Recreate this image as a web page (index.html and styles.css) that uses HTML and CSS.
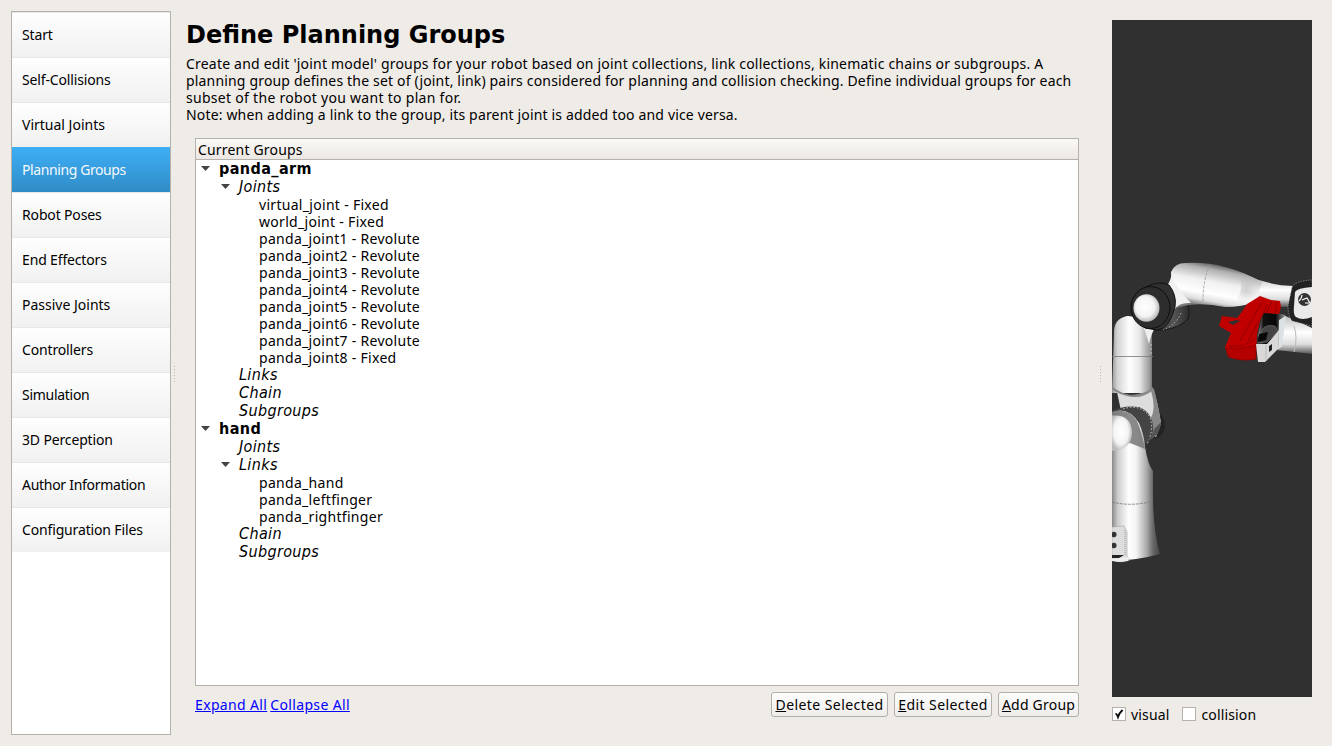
FILE: index.html
```html
<!DOCTYPE html>
<html lang="en">
<head>
<meta charset="utf-8">
<title>Define Planning Groups</title>
<link rel="stylesheet" href="styles.css">
</head>
<body>
<div class="app">
  <nav class="sidebar">
    <a class="nav-item">Start</a>
    <a class="nav-item">Self-Collisions</a>
    <a class="nav-item even">Virtual Joints</a>
    <a class="nav-item selected">Planning Groups</a>
    <a class="nav-item">Robot Poses</a>
    <a class="nav-item">End Effectors</a>
    <a class="nav-item even">Passive Joints</a>
    <a class="nav-item">Controllers</a>
    <a class="nav-item tight">Simulation</a>
    <a class="nav-item">3D Perception</a>
    <a class="nav-item tight">Author Information</a>
    <a class="nav-item">Configuration Files</a>
  </nav>
  <div class="splitter first"></div>
  <main class="content">
    <h1>Define Planning Groups</h1>
    <p class="intro"><span class="l1">Create and edit 'joint model' groups for your robot based on joint collections, link collections, kinematic chains or subgroups. A</span><br><span class="l2">planning group defines the set of (joint, link) pairs considered for planning and collision checking. Define individual groups for each</span><br><span class="l3">subset of the robot you want to plan for.</span><br><span class="l4">Note: when adding a link to the group, its parent joint is added too and vice versa.</span></p>
    <section class="tree">
      <div class="tree-head">Current Groups</div>
      <div class="group open"><span>panda_arm</span></div>
      <div class="kind open"><span>Joints</span></div>
      <div class="leaf">virtual_joint - Fixed</div>
      <div class="leaf">world_joint - Fixed</div>
      <div class="leaf">panda_joint1 - Revolute</div>
      <div class="leaf">panda_joint2 - Revolute</div>
      <div class="leaf">panda_joint3 - Revolute</div>
      <div class="leaf">panda_joint4 - Revolute</div>
      <div class="leaf">panda_joint5 - Revolute</div>
      <div class="leaf">panda_joint6 - Revolute</div>
      <div class="leaf">panda_joint7 - Revolute</div>
      <div class="leaf">panda_joint8 - Fixed</div>
      <div class="kind"><span>Links</span></div>
      <div class="kind"><span>Chain</span></div>
      <div class="kind"><span>Subgroups</span></div>
      <div class="group open"><span>hand</span></div>
      <div class="kind"><span>Joints</span></div>
      <div class="kind open"><span>Links</span></div>
      <div class="leaf">panda_hand</div>
      <div class="leaf">panda_leftfinger</div>
      <div class="leaf">panda_rightfinger</div>
      <div class="kind"><span>Chain</span></div>
      <div class="kind"><span>Subgroups</span></div>
    </section>
    <footer class="actions">
      <div class="links"><a>Expand All</a><a>Collapse All</a></div>
      <button class="delete"><u>D</u>elete Selected</button>
      <button class="edit"><u>E</u>dit Selected</button>
      <button class="add"><u>A</u>dd Group</button>
    </footer>
  </main>
  <div class="splitter second"></div>
  <aside class="preview">
    <svg class="robot" viewBox="1112 20 200 677" width="200" height="677">
      <defs>
        <linearGradient id="col" gradientUnits="userSpaceOnUse" x1="1112" x2="1154" y1="0" y2="0">
          <stop offset="0" stop-color="#999"/><stop offset=".13" stop-color="#d4d4d4"/><stop offset=".42" stop-color="#fff"/><stop offset=".65" stop-color="#e8e8e8"/><stop offset=".9" stop-color="#999"/><stop offset="1" stop-color="#555"/>
        </linearGradient>
        <linearGradient id="base" gradientUnits="userSpaceOnUse" x1="1112" x2="1160" y1="0" y2="0">
          <stop offset="0" stop-color="#888"/><stop offset=".12" stop-color="#ccc"/><stop offset=".35" stop-color="#fff"/><stop offset=".5" stop-color="#f4f4f4"/><stop offset=".72" stop-color="#aaa"/><stop offset=".86" stop-color="#666"/><stop offset="1" stop-color="#444"/>
        </linearGradient>
        <linearGradient id="arm" gradientUnits="userSpaceOnUse" x1="1218" y1="264" x2="1210" y2="307">
          <stop offset="0" stop-color="#555"/><stop offset=".15" stop-color="#b0b0b0"/><stop offset=".42" stop-color="#f0f0f0"/><stop offset=".7" stop-color="#fff"/><stop offset=".87" stop-color="#ddd"/><stop offset="1" stop-color="#777"/>
        </linearGradient>
        <linearGradient id="wrist" x1="0" y1="0" x2="0" y2="1">
          <stop offset="0" stop-color="#bbb"/><stop offset=".45" stop-color="#fff"/><stop offset=".75" stop-color="#ddd"/><stop offset="1" stop-color="#555"/>
        </linearGradient>
        <linearGradient id="knuckle" x1="0" y1="0" x2="1" y2="0">
          <stop offset="0" stop-color="#222"/><stop offset=".6" stop-color="#555"/><stop offset="1" stop-color="#2c2c2c"/>
        </linearGradient>
        <linearGradient id="metal" x1="0" y1="0" x2="1" y2="0">
          <stop offset="0" stop-color="#999"/><stop offset=".2" stop-color="#111"/><stop offset=".65" stop-color="#080808"/><stop offset="1" stop-color="#999"/>
        </linearGradient>
        <radialGradient id="cap" cx=".45" cy=".45" r=".55">
          <stop offset="0" stop-color="#fff"/><stop offset=".65" stop-color="#f4f4f4"/><stop offset="1" stop-color="#bbb"/>
        </radialGradient>
        <radialGradient id="shade" gradientUnits="userSpaceOnUse" cx="1246" cy="290" r="15">
          <stop offset="0" stop-color="#888" stop-opacity=".35"/><stop offset="1" stop-color="#aaa" stop-opacity="0"/>
        </radialGradient>
      </defs>
      <!-- elbow housing -->
      <path d="M1160 290 L1187 304 Q1191 311 1188 319 Q1181 327 1164 330 L1150 330Z" fill="url(#knuckle)" stroke="#181818"/>
      <path d="M1181 313Q1176 325 1163 330" fill="none" stroke="#ddd" stroke-width=".7" stroke-dasharray="1.5 2"/>
      <!-- forearm -->
      <path d="M1248 276 Q1268 285 1293 286 V307 H1276 L1246 303Z" fill="url(#wrist)"/>
      <path d="M1167 286 Q1172 279 1171 272 Q1175 263 1185 263 Q1207 262 1225 267 Q1242 271 1262 282 L1256 302 Q1242 307 1225 307 Q1205 303 1189 305 L1175 308Z" fill="url(#arm)"/>
      <path d="M1225 267Q1244 272 1272 285L1264 304L1225 307Q1245 300 1240 277Z" fill="url(#shade)"/>
      <path d="M1167 286Q1171 281 1172 276Q1176 288 1191 303Q1179 302 1174 310Z" fill="#f1f1f1"/>
      <path d="M1210 265Q1203 279 1203 302" fill="none" stroke="#999" stroke-width=".8" stroke-dasharray="3 1.3"/>
      <!-- upper arm -->
      <path d="M1112 393 L1114 334 Q1113 319 1127 316 Q1136 315 1152 327 V393Z" fill="url(#col)"/>
      <path d="M1144 328H1155Q1151 334 1149 344Z" fill="#eee"/>
      <path d="M1112 356.500H1153" stroke="#777" stroke-width=".8"/>
      <path d="M1151 344V356" stroke="#ddd" stroke-dasharray="2 2" stroke-width=".7"/>
      <!-- elbow -->
      <path d="M1146 287Q1159 280 1169 285Q1177 295 1175 307Q1169 329 1157 330L1145 328Z" fill="#303030" stroke="#111"/>
      <ellipse cx="1150.500" cy="307.500" rx="19.500" ry="21" fill="#2d2d2d" stroke="#0d0d0d"/>
      <ellipse cx="1146.500" cy="308" rx="13" ry="13.800" fill="url(#cap)"/>
      <!-- shoulder -->
      <path d="M1154 410Q1165 415 1165 426Q1163 438 1154 439Z" fill="#222"/>
      <path d="M1117 392 Q1136 400 1153 388 Q1158 404 1161 423 L1156 437 L1123 420Z" fill="#ddd"/>
      <path d="M1112 386Q1118 392 1129 395Q1144 395 1153 387V390Q1144 398 1132 397Q1119 395 1112 389Z" fill="#888"/>
      <path d="M1151 391L1154 389Q1158 404 1161 423L1156 437L1149 421Q1157 411 1151 391Z" fill="#888"/>
      <path d="M1112 411Q1123 405 1139 407Q1154 413 1153 431Q1152 438 1147 444L1112 426Z" fill="#444"/>
      <path d="M1123 409Q1140 403 1150 417Q1154 431 1147 444" fill="none" stroke="#ddd" stroke-width=".9" stroke-dasharray="1.5 2"/>
      <path d="M1154 429L1161 422Q1160 437 1147 441Q1152 436 1154 429Z" fill="#555"/>
      <path d="M1112 412Q1128 406 1139 423Q1144 434 1145 447Q1148 465 1153 471V501Q1154 535 1160 554Q1139 560 1112 561Z" fill="url(#base)"/>
      <path d="M1112 412Q1128 407 1137 421Q1142 433 1145 449L1130 443L1112 450Z" fill="#757575" opacity=".85"/>
      <path d="M1112 415.500Q1132 414 1132 433Q1131 450 1112 451Z" fill="url(#cap)"/>
      <path d="M1112 502Q1132 507 1153 501" fill="none" stroke="#777" stroke-width=".8" stroke-dasharray="3 1"/>
      <path d="M1112 527L1124 526L1127 532V556L1130 560L1122 562L1112 560Z" fill="#ddd" stroke="#999" stroke-width=".5"/>
      <ellipse cx="1114" cy="534.500" rx="2.500" ry="2.800" fill="#333"/>
      <ellipse cx="1114" cy="545.500" rx="2.500" ry="2.800" fill="#333"/>
      <path d="M1125 530V555" stroke="#777" stroke-width=".6" stroke-dasharray="1 1"/>
      <path d="M1112 555H1124L1119 558H1112Z" fill="#222"/>
      <path d="M1112 559L1129 557L1128 561L1118 562L1112 561Z" fill="#eee"/>
      <!-- wrist -->
      <path d="M1283 315Q1293 319 1312 328V354Q1296 352 1276 350Z" fill="url(#wrist)"/>
      <path d="M1294 326Q1298 338 1294 352" fill="none" stroke="#bbb"/>
      <path d="M1292 287Q1295 281 1312 280V326L1292 321Q1288 315 1288 306Z" fill="#222" stroke="#ddd" stroke-width=".5" stroke-dasharray="1.3 1.3"/>
      <path d="M1295 292Q1297 288 1312 287V317Q1302 321 1296 317Q1293 315 1294 306Z" fill="#eaeaea"/>
      <circle cx="1304.500" cy="299.500" r="6.500" fill="#333"/>
      <path d="M1299 301Q1302 298 1302 295M1302 300L1307 298L1310 303M1305 303H1309" stroke="#fff" stroke-width="1.200" fill="none"/>
      <!-- flange and finger -->
      <path d="M1263 313Q1274 311 1285 315L1279 350L1264 345L1258 336Z" fill="url(#metal)"/>
      <path d="M1262 330Q1265 324 1275 326L1278 331L1267 342L1258 343Z" fill="#444" stroke="#777" stroke-width=".6"/>
      <path d="M1279 320L1286 316L1282 346L1278 350Z" fill="#dce2e4"/>
      <!-- gripper hand -->
      <path d="M1219 326L1222 316L1237 318L1241 313L1247 304L1260 296L1271 300L1280 301L1281 307L1279 314L1264 313L1260 321L1257 334L1256 359Q1242 362 1228 357L1225 347L1231 333L1219 326Z" fill="#c00000"/>
      <path d="M1226 348Q1241 350 1256 345L1256 359Q1242 362 1229 357Z" fill="#b40000" stroke="#850000" stroke-width=".6"/>
      <path d="M1262 302L1240 341M1268 304L1248 341M1272 301L1267 313M1276 302V313M1229 346Q1243 348 1255 339" fill="none" stroke="#850000" stroke-width=".8"/>
      <path d="M1228 322L1237 320L1240 321L1233 325Z" fill="#303030"/>
      <path d="M1256 344L1267 344L1279 330L1278 349L1265 362L1258 362Z" fill="#d8d8d8"/>
      <path d="M1266 345V361" stroke="#bbb"/>
      <path d="M1259 334L1268 332L1266 340L1258 342Z" fill="#080808"/>
      <path d="M1269 346L1272 344V350L1269 352Z" fill="#222"/>
    </svg>
    <div class="checks">
      <label class="check"><span class="box"><svg width="12" height="12" viewBox="0 0 12 12"><path d="M2.500 5.500Q4 6 5 9Q6.300 5 9.500 2" fill="none" stroke="#000" stroke-width="1.800"/></svg></span><span>visual</span></label>
      <label class="check"><span class="box"></span><span>collision</span></label>
    </div>
  </aside>
</div>
</body>
</html>
```

FILE: styles.css
```css
* { box-sizing: border-box; }
body { margin: 0; background: #efebe7; color: #000; font: 14px/17px "Noto Sans", sans-serif; overflow: hidden; }
.app { display: flex; width: 1332px; height: 746px; }
.sidebar { width: 160px; height: 724px; margin: 11px 0 0 11px; border: 1px solid #b5b2ae; background: #fff; flex: none; }
.nav-item { display: flex; align-items: center; height: 45px; padding: 0 0 2px 10px; border-top: 1px solid #e8e8e8; background: linear-gradient(#fefefe, #f1f1f1); white-space: nowrap; letter-spacing: -.15px; }
.nav-item.even { letter-spacing: 0; }
.nav-item.tight { letter-spacing: -.28px; }
.nav-item.selected { color: #f4f8fb; background: linear-gradient(#3daef5, #308cc6); border-top-color: #3daef5; letter-spacing: -.4px; }
.splitter { flex: none; width: 1px; height: 17px; margin-top: 366px; background: repeating-linear-gradient(#bbb8b4 0 1px, transparent 1px 3px); }
.first { margin-left: 3px; }
.second { margin-left: 21px; }
.content { width: 893px; margin: 21px 0 0 11px; flex: none; }
h1 { margin: 0; font: bold 24px/29px "DejaVu Sans", sans-serif; }
.intro { margin: 5px 0 0; height: 68px; white-space: nowrap; }
.l1 { letter-spacing: .2px; }
.l2 { letter-spacing: .17px; }
.l3 { letter-spacing: .29px; }
.l4 { letter-spacing: .165px; }
.tree { height: 548px; margin: 15px 0 0 9px; border: 1px solid #b5b2ae; background: #fff; }
.tree-head { height: 21px; border-bottom: 1px solid #b5b2ae; background: linear-gradient(#fbf9f7, #ebe7e3); padding: 2px 0 0 2px; letter-spacing: .18px; }
.leaf { height: 17px; padding-left: 63px; line-height: 18px; letter-spacing: .3px; }
.group, .kind { display: flex; height: 18px; line-height: 17px; font-family: "DejaVu Sans Condensed", "DejaVu Sans", sans-serif; font-stretch: condensed; font-size: 16px; }
.group { padding-left: 23px; font-weight: bold; letter-spacing: .4px; }
.kind { padding-left: 43px; font-style: italic; letter-spacing: .35px; }
.open::before { content: ""; width: 9px; height: 5px; margin: 6px 9px 0 -18px; background: #444; clip-path: polygon(0 0, 100% 0, 50% 100%); }
.actions { display: flex; height: 25px; margin: 6px 0 0 9px; gap: 6px; }
.links { display: flex; gap: 3px; margin-right: auto; padding-top: 4px; color: #00f; text-decoration: underline; letter-spacing: .35px; }
button { height: 25px; padding: 0; border: 1px solid #b2afab; border-radius: 3px; background: linear-gradient(#fdfdfd, #efedea); color: #000; font: inherit; white-space: nowrap; letter-spacing: .43px; }
.delete { width: 117px; }
.edit { width: 98px; }
.add { width: 81px; letter-spacing: .22px; }
.preview { margin: 20px 0 0 11px; width: 200px; flex: none; }
.robot { display: block; background: #303030; }
.checks { display: flex; gap: 13px; margin-top: 9px; letter-spacing: .15px; }
.check { display: flex; gap: 5px; }
.box { width: 14px; height: 14px; margin-top: 1px; border: 1px solid #b5b2ae; background: #fff; }
.box svg { display: block; }
```
